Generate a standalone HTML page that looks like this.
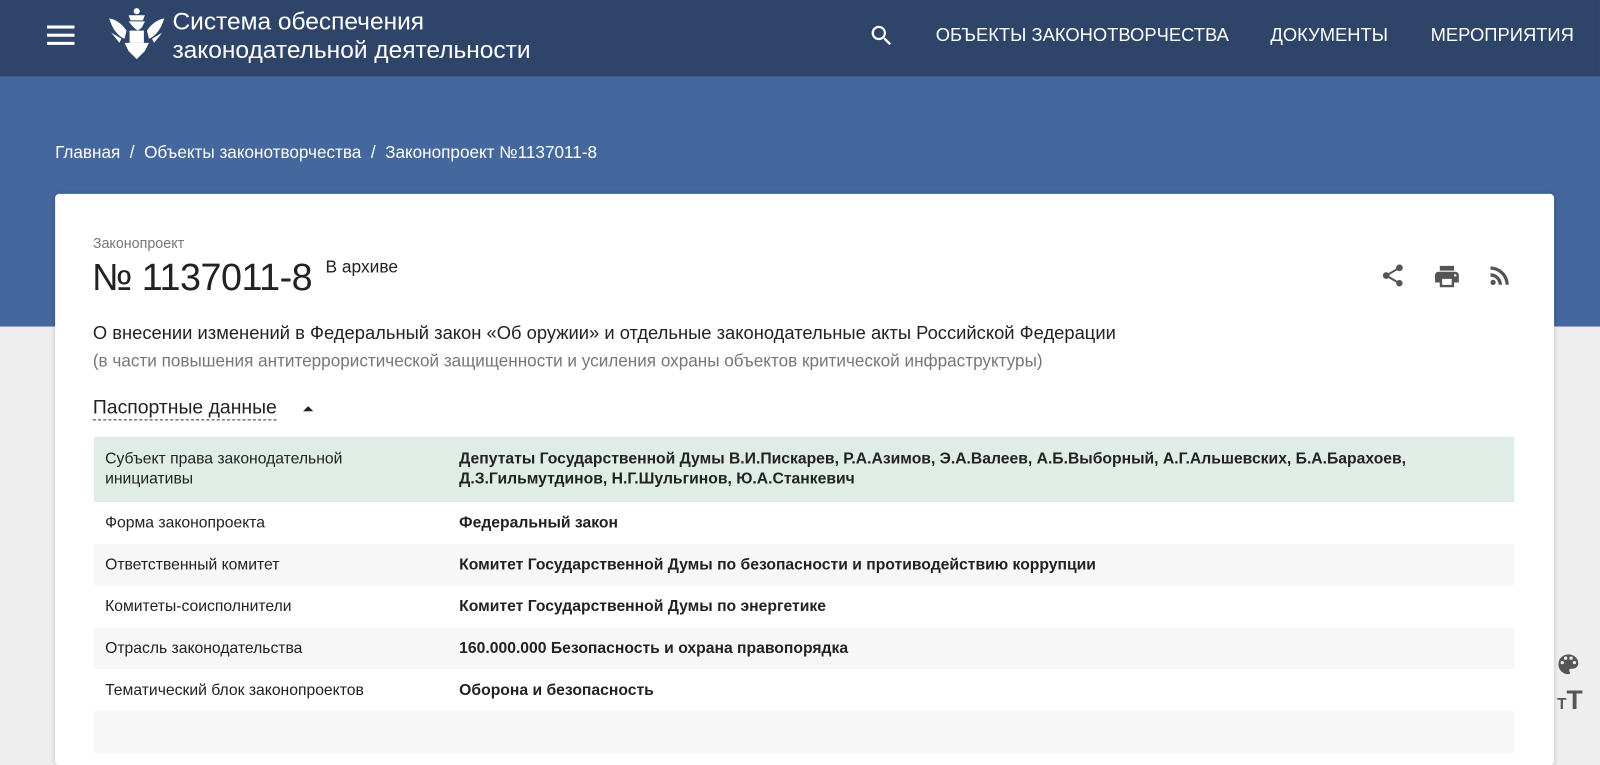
<!DOCTYPE html>
<html><head><meta charset="utf-8"><style>
*{margin:0;padding:0;box-sizing:border-box}
body{width:1600px;height:720px;overflow:hidden;background:#eeeeee;font-family:"Liberation Sans",sans-serif;position:relative}
#w{position:absolute;left:0;top:0;width:1568px;height:706px;transform:scale(1.0204);transform-origin:0 0}
.hdr{position:absolute;left:0;top:0;width:1568px;height:75px;background:#2e4469;color:#fff}
.ban{position:absolute;left:0;top:75px;width:1568px;height:245px;background:#44679e}
.crumb{position:absolute;left:54px;top:140px;color:#fff;font-size:16.8px}
.card{position:absolute;left:54px;top:190px;width:1469px;height:560px;background:#fff;border-radius:4px;box-shadow:0 1px 4px rgba(0,0,0,.2)}
.nav{position:absolute;top:24px;font-size:18px;color:#fff}
table{position:absolute;left:38px;top:238px;width:1392px;border-collapse:collapse;font-size:15.4px;color:#222}
td{padding:0 11px;vertical-align:middle;height:41px}
td:first-child{width:347px}
td:last-child{font-weight:bold}
tr:nth-child(odd){background:#f7f7f7}
tr:first-child{background:#e0ede7}
tr:first-child td{height:64px;line-height:20px}
</style></head><body><div id="w">
<div class="hdr">
 <div style="position:absolute;left:46px;top:25px;width:27px;height:3px;background:#fff;box-shadow:0 8px 0 #fff,0 16px 0 #fff"></div>
 <svg style="position:absolute;left:105px;top:6px" width="58" height="54" viewBox="0 0 58 54"><g fill="#fff"><circle cx="29" cy="5" r="3"/><path d="M21 9h16l-2 5h-12z"/><path d="M2 12c7 1 13 6 17 12l-2 8c-7-3-12-10-15-20zM56 12c-7 1-13 6-17 12l2 8c7-3 12-10 15-20z"/><path d="M21 15h16l-3 6-4 3-4-3z"/><path d="M22 24h14v12h-14z"/><path d="M17 36h24l-4 8-8 8-8-8z"/><path d="M4 26l10 6-2 4zM54 26l-10 6 2 4z"/></g></svg>
 <div style="position:absolute;left:169px;top:8px;font-size:24px;line-height:28px;color:#fff">Система обеспечения<br>законодательной деятельности</div>
 <svg style="position:absolute;left:851px;top:22px" width="26" height="26" viewBox="0 0 24 24"><path fill="#fff" d="M15.5 14h-.8l-.3-.3A6.5 6.5 0 1 0 9.5 16a6.5 6.5 0 0 0 4.2-1.6l.3.3v.8l5 5 1.5-1.5zm-6 0A4.5 4.5 0 1 1 14 9.5 4.5 4.5 0 0 1 9.5 14z"/></svg>
 <div class="nav" style="left:917px">ОБЪЕКТЫ ЗАКОНОТВОРЧЕСТВА</div>
 <div class="nav" style="left:1245px">ДОКУМЕНТЫ</div>
 <div class="nav" style="left:1402px">МЕРОПРИЯТИЯ</div>
</div>
<div class="ban"></div>
<div class="crumb">Главная &nbsp;/&nbsp; Объекты законотворчества &nbsp;/&nbsp; Законопроект №1137011-8</div>
<div class="card">
 <div style="position:absolute;left:37px;top:40px;font-size:14px;color:#777">Законопроект</div>
 <div style="position:absolute;left:36px;top:61px;font-size:37px;color:#222;letter-spacing:-0.5px">№ 1137011-8</div>
 <div style="position:absolute;left:265px;top:62px;font-size:17px;color:#222">В архиве</div>
 <svg style="position:absolute;left:1298px;top:67px" width="26" height="26" viewBox="0 0 24 24"><path fill="#555" d="M18 16.1c-.8 0-1.4.3-2 .8l-7.1-4.2c.1-.2.1-.5.1-.7s0-.5-.1-.7L16 7.2c.5.5 1.2.8 2 .8 1.7 0 3-1.3 3-3s-1.3-3-3-3-3 1.3-3 3c0 .2 0 .5.1.7L8 9.8C7.5 9.3 6.8 9 6 9c-1.7 0-3 1.3-3 3s1.3 3 3 3c.8 0 1.5-.3 2-.8l7.1 4.2c-.1.2-.1.4-.1.6 0 1.6 1.3 2.9 2.9 2.9s2.9-1.3 2.9-2.9-1.2-2.9-2.8-2.9z"/></svg>
 <svg style="position:absolute;left:1350px;top:67px" width="28" height="28" viewBox="0 0 24 24"><path fill="#555" d="M19 8H5c-1.7 0-3 1.3-3 3v6h4v4h12v-4h4v-6c0-1.7-1.3-3-3-3zm-3 11H8v-5h8v5zm3-7c-.6 0-1-.4-1-1s.4-1 1-1 1 .4 1 1-.4 1-1 1zm-1-9H6v4h12V3z"/></svg>
 <svg style="position:absolute;left:1402px;top:66px" width="28" height="28" viewBox="0 0 24 24"><circle cx="6.2" cy="17.8" r="2.2" fill="#555"/><path fill="#555" d="M4 4.4v2.8c7 0 12.6 5.7 12.6 12.6h2.8C19.4 11.3 12.5 4.4 4 4.4zm0 5.7v2.8c3.8 0 6.9 3.1 6.9 6.9h2.8c0-5.4-4.4-9.7-9.7-9.7z"/></svg>
 <div style="position:absolute;left:37px;top:126px;font-size:18px;color:#222">О внесении изменений в Федеральный закон «Об оружии» и отдельные законодательные акты Российской Федерации</div>
 <div style="position:absolute;left:37px;top:154px;font-size:16.8px;color:#777">(в части повышения антитеррористической защищенности и усиления охраны объектов критической инфраструктуры)</div>
 <div style="position:absolute;left:37px;top:199px;font-size:19px;color:#222;border-bottom:1px dashed #333;line-height:22px">Паспортные данные</div>
 <div style="position:absolute;left:243px;top:208px;width:0;height:0;border-left:5px solid transparent;border-right:5px solid transparent;border-bottom:5px solid #222"></div>
 <table>
  <tr><td>Субъект права законодательной<br>инициативы</td><td>Депутаты Государственной Думы В.И.Пискарев, Р.А.Азимов, Э.А.Валеев, А.Б.Выборный, А.Г.Альшевских, Б.А.Барахоев,<br>Д.З.Гильмутдинов, Н.Г.Шульгинов, Ю.А.Станкевич</td></tr>
  <tr><td>Форма законопроекта</td><td>Федеральный закон</td></tr>
  <tr><td>Ответственный комитет</td><td>Комитет Государственной Думы по безопасности и противодействию коррупции</td></tr>
  <tr><td>Комитеты-соисполнители</td><td>Комитет Государственной Думы по энергетике</td></tr>
  <tr><td>Отрасль законодательства</td><td>160.000.000 Безопасность и охрана правопорядка</td></tr>
  <tr><td>Тематический блок законопроектов</td><td>Оборона и безопасность</td></tr>
  <tr><td>&nbsp;</td><td></td></tr>
 </table>
</div>
<svg style="position:absolute;left:1524px;top:638px" width="26" height="26" viewBox="0 0 24 24"><path fill="#555" d="M12 3a9 9 0 0 0 0 18c.8 0 1.5-.7 1.5-1.5 0-.4-.1-.7-.4-1-.2-.3-.4-.6-.4-1 0-.8.7-1.5 1.5-1.5H16c2.8 0 5-2.2 5-5C21 6.6 17 3 12 3zm-5.5 9a1.5 1.5 0 1 1 0-3 1.5 1.5 0 0 1 0 3zm3-4a1.5 1.5 0 1 1 0-3 1.5 1.5 0 0 1 0 3zm5 0a1.5 1.5 0 1 1 0-3 1.5 1.5 0 0 1 0 3zm3 4a1.5 1.5 0 1 1 0-3 1.5 1.5 0 0 1 0 3z"/></svg>
<div style="position:absolute;left:1526px;top:674px;font-size:26px;font-weight:bold;color:#555;line-height:24px"><span style="font-size:15px">T</span>T</div>
</div></body></html>
